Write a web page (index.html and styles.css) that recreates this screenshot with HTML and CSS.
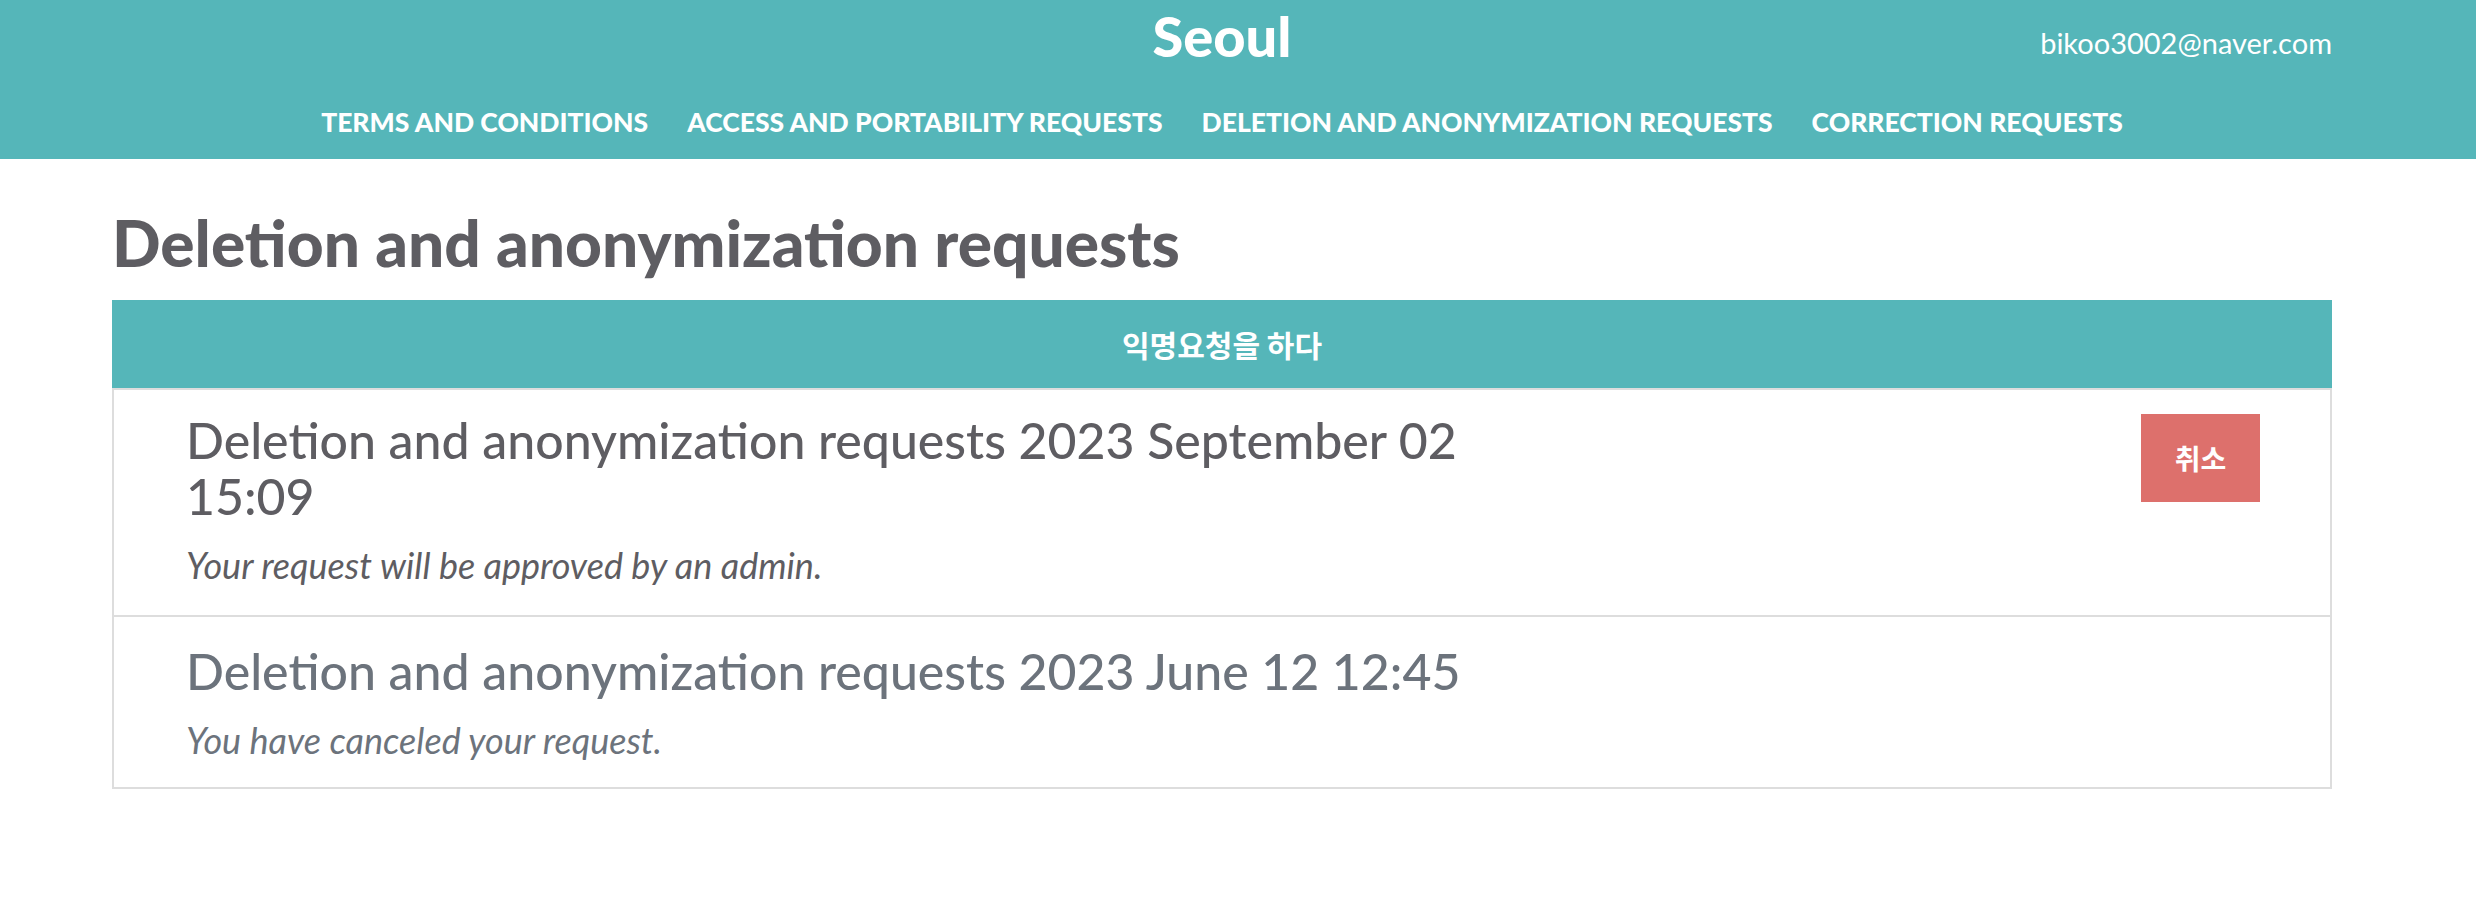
FILE: index.html
```html
<!DOCTYPE html>
<html lang="en">
<head>
<meta charset="utf-8">
<title>Seoul - Deletion and anonymization requests</title>
<link rel="stylesheet" href="styles.css">
</head>
<body>
<header class="topbar">
  <div class="container">
    <div class="top-row">
      <div class="top-spacer"></div>
      <div class="brand">Seoul</div>
      <div class="user">bikoo3002@naver.com</div>
    </div>
    <nav class="nav">
      <a class="nav-link" href="#">Terms and conditions</a>
      <a class="nav-link" href="#">Access and portability requests</a>
      <a class="nav-link" href="#">Deletion and anonymization requests</a>
      <a class="nav-link" href="#">Correction requests</a>
    </nav>
  </div>
</header>
<main class="container">
  <h1 class="page-title">Deletion and anonymization requests</h1>
  <div class="request-panel">
    <button class="new-request" type="button">익명요청을 하다</button>
    <ul class="request-list">
      <li class="request-item">
        <div class="request-body">
          <h2 class="request-title">Deletion and anonymization requests 2023 September 02 15:09</h2>
          <p class="request-status">Your request will be approved by an admin.</p>
        </div>
        <button class="cancel-btn" type="button">취소</button>
      </li>
      <li class="request-item is-canceled">
        <div class="request-body">
          <h2 class="request-title">Deletion and anonymization requests 2023 June 12 12:45</h2>
          <p class="request-status">You have canceled your request.</p>
        </div>
      </li>
    </ul>
  </div>
</main>
</body>
</html>
```

FILE: styles.css
```css
* { box-sizing: border-box; }

html, body {
  margin: 0;
  padding: 0;
  background: #ffffff;
  font-family: "Lato", "Noto Sans CJK KR", sans-serif;
  color: #5e5d62;
}

.container {
  width: 2220px;
  margin-left: 112px;
}

.topbar {
  background: #55b6b9;
  height: 159px;
  color: #ffffff;
}

.top-row {
  display: grid;
  grid-template-columns: 1fr auto 1fr;
  align-items: start;
  height: 100px;
}

.brand {
  font-size: 56px;
  font-weight: 900;
  line-height: 72px;
  text-align: center;
}

.user {
  justify-self: end;
  font-size: 29px;
  font-weight: 400;
  line-height: 36px;
  padding-top: 25px;
}

.nav {
  display: flex;
  justify-content: center;
  gap: 39px;
}

.nav-link {
  color: #ffffff;
  text-decoration: none;
  text-transform: uppercase;
  font-weight: 900;
  font-size: 26.5px;
  line-height: 44px;
}

.page-title {
  margin: 0;
  padding-top: 44px;
  padding-bottom: 17px;
  font-size: 64px;
  font-weight: 900;
  line-height: 80px;
  color: #5e5d62;
}

.request-panel {
  display: flex;
  flex-direction: column;
}

.new-request {
  display: block;
  width: 100%;
  height: 88px;
  border: 0;
  background: #55b6b9;
  color: #ffffff;
  font-family: "Noto Sans CJK KR", sans-serif;
  font-size: 30px;
  font-weight: 700;
  cursor: pointer;
}

.request-list {
  list-style: none;
  margin: 0;
  padding: 0;
  border: 2px solid #dddddd;
}

.request-item {
  display: flex;
  justify-content: space-between;
  align-items: flex-start;
  padding: 22px 70px 28px 72px;
}

.request-item + .request-item {
  border-top: 2px solid #dddddd;
  padding-top: 26px;
  padding-bottom: 25px;
}

.request-body {
  max-width: 1320px;
}

.request-title {
  margin: 0;
  font-size: 50px;
  font-weight: 500;
  line-height: 56px;
  color: #5e5d62;
}

.request-status {
  margin: 19px 0 0;
  font-size: 36px;
  font-style: italic;
  line-height: 44px;
  color: #5e5d62;
}

.is-canceled .request-title,
.is-canceled .request-status {
  color: #6c737c;
}

.cancel-btn {
  width: 119px;
  height: 88px;
  margin-top: 2px;
  border: 0;
  background: #dd706c;
  color: #ffffff;
  font-family: "Noto Sans CJK KR", sans-serif;
  font-size: 28px;
  font-weight: 700;
  cursor: pointer;
}
```
